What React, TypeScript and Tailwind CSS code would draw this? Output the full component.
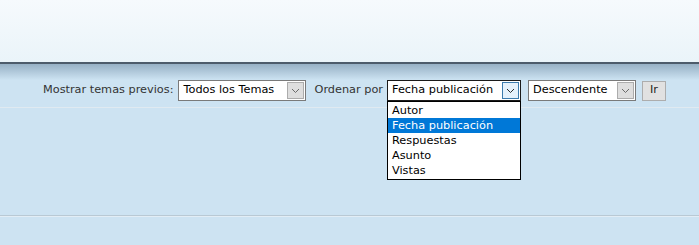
import React from "react";

const Chevron: React.FC<{ className?: string }> = ({ className }) => (
  <svg width="9" height="6" viewBox="0 0 9 6" className={className}>
    <path d="M1 1 L4.5 4.5 L8 1" fill="none" stroke="currentColor" strokeWidth="1" />
  </svg>
);

type TSelectProps = {
  value: string;
  width: string;
  focused?: boolean;
};

const FakeSelect: React.FC<TSelectProps> = ({ value, width, focused = false }) => {
  return (
    <div
      className={`flex h-[21px] items-stretch border bg-white ${width} ${
        focused ? "border-[#1a1a1a]" : "border-[#7a7a7a]"
      }`}
    >
      <span className="flex flex-1 items-center pl-[4px] text-[11.3px] text-black whitespace-nowrap">
        {value}
      </span>
      <span
        className={`m-[1px] flex w-[17px] items-center justify-center border ${
          focused
            ? "border-[#3d7bad] bg-[#e5f1fb] text-[#2b2b2b]"
            : "border-[#acacac] bg-[#dedede] text-[#6b6b6b]"
        }`}
      >
        <Chevron />
      </span>
    </div>
  );
};

const options = ["Autor", "Fecha publicación", "Respuestas", "Asunto", "Vistas"];

export default function App() {
  return (
    <div className="relative h-[245px] w-[699px] overflow-hidden bg-[#cde3f2] font-['DejaVu_Sans',sans-serif]">
      {/* top panel */}
      <div className="h-[64px] border-b-2 border-[#4d5c6b] bg-gradient-to-b from-[#f6fafd] to-[#eaf4f9]" />
      <div className="h-[16px] bg-gradient-to-b from-[#97b1c5] to-[#cde3f2]" />

      {/* sort bar */}
      <div className="flex h-[21px] items-center justify-end pr-[33px] text-[11.3px]">
        <span className="mr-[5px] text-[#333]">Mostrar temas previos:</span>
        <FakeSelect value="Todos los Temas" width="w-[128px]" />
        <span className="ml-[8px] mr-[4px] text-[#333]">Ordenar por</span>
        <div className="relative">
          <FakeSelect value="Fecha publicación" width="w-[134px]" focused />
          <div className="absolute left-0 top-[21px] z-10 w-[134px] border border-black bg-white py-[1px]">
            {options.map((o) => (
              <div
                key={o}
                className={`h-[15px] pl-[4px] text-[11.3px] leading-[15px] ${
                  o === "Fecha publicación" ? "bg-[#0078d7] text-white" : "text-black"
                }`}
              >
                {o}
              </div>
            ))}
          </div>
        </div>
        <div className="ml-[7px]">
          <FakeSelect value="Descendente" width="w-[108px]" />
        </div>
        <button className="ml-[6px] h-[20px] w-[24px] border border-[#adadad] bg-[#e1e1e1] text-[11.3px] text-[#222]">
          Ir
        </button>
      </div>

      <div className="h-[6px]" />
      <div className="h-px bg-[#e0eaf1]" />

      <div className="h-[107px]" />
      <div className="h-px bg-[#b9c9d4]" />
      <div className="h-px bg-[#e2edf5]" />
    </div>
  );
}
